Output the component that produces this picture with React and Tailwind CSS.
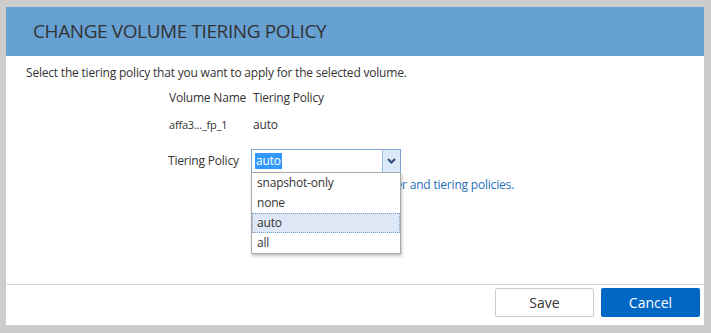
import React from 'react';

const font = { fontFamily: '"Open Sans", "Noto Sans", sans-serif' };

const options = ['snapshot-only', 'none', 'auto', 'all'];

const App = () => {
  return (
    <div
      className="w-[711px] h-[333px] bg-[#cccccc] pt-[7px] pl-[6px] pr-[7px] pb-[8px]"
      style={font}
    >
      <div className="w-full h-full bg-white flex flex-col">
        {/* header */}
        <div className="h-[49px] bg-[#67a1d4] flex items-center pl-[27px]">
          <h1 className="text-[19px] text-[#333333] tracking-[-0.4px]">CHANGE VOLUME TIERING POLICY</h1>
        </div>

        {/* body */}
        <div className="flex-1 flex flex-col text-[12px] text-[#333333] leading-[16px] tracking-[-0.2px]">
          <p className="mt-[9px] pl-[20px]">
            Select the tiering policy that you want to apply for the selected volume.
          </p>

          <div className="grid grid-cols-[84px_auto] ml-[163px] mt-[9px] gap-y-[11px]">
            <span>Volume Name</span>
            <span>Tiering Policy</span>
            <span className="text-[11px]">affa3..._fp_1</span>
            <span>auto</span>
          </div>

          <div className="flex items-center ml-[162px] mt-[16px]">
            <span className="w-[83px]">Tiering Policy</span>
            <div className="relative w-[150px] h-[24px] border border-[#7fa6d0] flex">
              <div className="flex-1 flex items-center pl-[3px]">
                <span className="bg-[#3399ff] text-white px-[1px] leading-[16px]">auto</span>
              </div>
              <div className="w-[18px] bg-[#dce9f8] border-l border-[#9bbde0] flex items-center justify-center">
                <svg width="9" height="6" viewBox="0 0 9 6">
                  <path d="M1 1 L4.5 4.5 L8 1" fill="none" stroke="#2c4a7a" strokeWidth="2" />
                </svg>
              </div>

              {/* open list */}
              <ul className="absolute left-[-1px] top-[22px] w-[150px] bg-white border border-[#a9a9a9] shadow-[1px_2px_3px_rgba(0,0,0,0.25)] z-10">
                {options.map((opt) => (
                  <li
                    key={opt}
                    className={
                      opt === 'auto'
                        ? 'h-[20px] leading-[18px] pl-[4px] bg-[#dde7f5] border border-dotted border-[#7f9db9]'
                        : 'h-[20px] leading-[20px] pl-[5px]'
                    }
                  >
                    {opt}
                  </li>
                ))}
              </ul>
            </div>
          </div>

          <div className="ml-[245px] w-[263px] overflow-hidden whitespace-nowrap flex justify-end mt-[4px] text-[#1f6fb6]">
            <span>Learn more about FabricPool tier and tiering policies.</span>
          </div>
        </div>

        {/* footer */}
        <div className="border-t border-[#d6d6d6] pt-[3px] pb-[8px] pr-[4px] flex justify-end gap-[7px]">
          <button className="w-[99px] h-[29px] border border-[#cccccc] rounded-[2px] bg-white text-[14px] text-[#333333]">
            Save
          </button>
          <button className="w-[99px] h-[29px] rounded-[2px] bg-[#0067c5] text-[14px] text-white">
            Cancel
          </button>
        </div>
      </div>
    </div>
  );
};

export default App;
